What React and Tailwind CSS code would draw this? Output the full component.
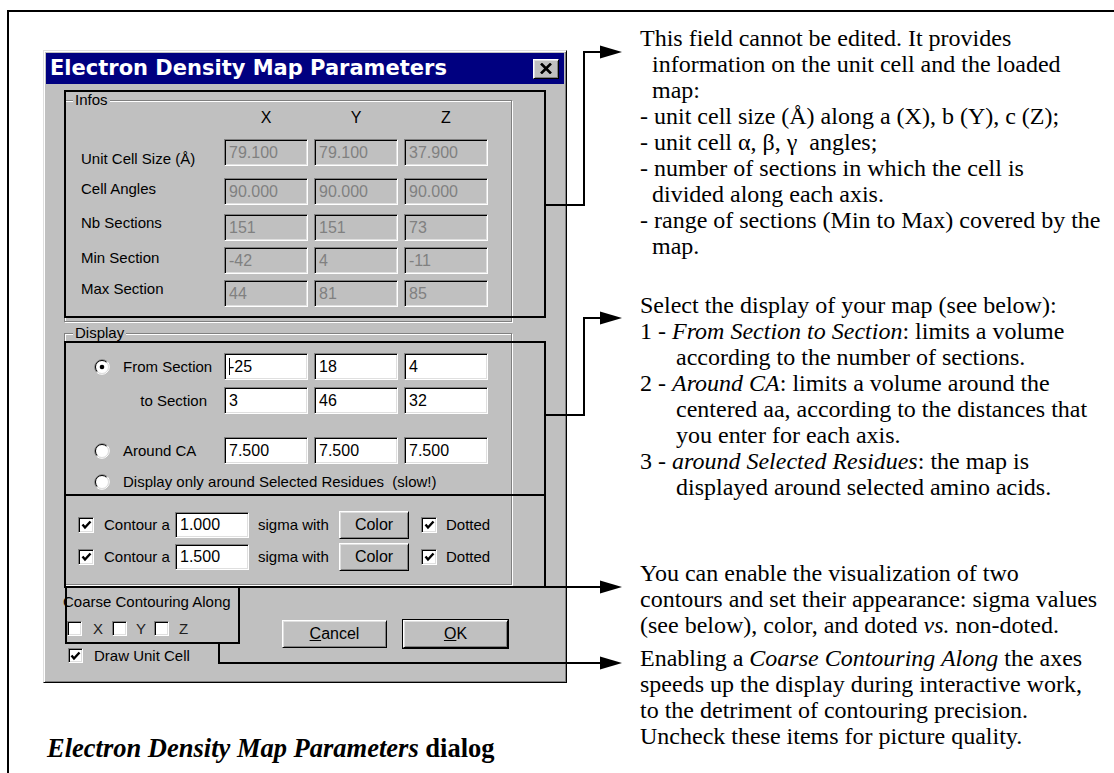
import React from "react";

// Win95 style bevels
const raised =
  "border border-t-white border-l-white border-b-black border-r-black shadow-[inset_1px_1px_0_#dfdfdf,inset_-1px_-1px_0_#808080]";
const sunken =
  "border border-t-[#808080] border-l-[#808080] border-b-white border-r-white shadow-[inset_1px_1px_0_#000,inset_-1px_-1px_0_#dfdfdf]";
const etched = "border border-[#808080] shadow-[inset_1px_1px_0_#fff,1px_1px_0_#fff]";

const Field = ({ value, on, w = "w-[84px]", h = "h-[27px]", caret }) => (
  <div
    className={`${w} ${h} ${sunken} ${
      on ? "bg-white text-black" : "bg-[#c0c0c0] text-[#808080]"
    } flex items-center pl-[4px] text-[16px] leading-none`}
  >
    {caret && <span className="w-[1px] h-[17px] bg-black -mr-[1px]"></span>}
    {value}
  </div>
);

const Check = ({ on, size = "w-[16px] h-[16px]", cls = "" }) => (
  <div className={`${size} ${sunken} bg-white flex items-center justify-center shrink-0 ${cls}`}>
    {on && (
      <svg width="11" height="10" viewBox="0 0 11 10">
        <polyline points="1.5,4.5 4,7.5 9.5,1.5" fill="none" stroke="#000" strokeWidth="2.4" />
      </svg>
    )}
  </div>
);

const Radio = ({ on }) => (
  <svg width="16" height="16" viewBox="0 0 16 16" className="shrink-0">
    <circle cx="8" cy="8" r="6.5" fill="#fff" />
    <path d="M2.7 13.3 A7.5 7.5 0 0 1 13.3 2.7" fill="none" stroke="#808080" strokeWidth="1" />
    <path d="M13.3 2.7 A7.5 7.5 0 0 1 2.7 13.3" fill="none" stroke="#fff" strokeWidth="1" />
    <path d="M3.4 12.6 A6.5 6.5 0 0 1 12.6 3.4" fill="none" stroke="#000" strokeWidth="1" />
    <path d="M12.6 3.4 A6.5 6.5 0 0 1 3.4 12.6" fill="none" stroke="#dfdfdf" strokeWidth="1" />
    {on && <circle cx="8" cy="8" r="2.3" fill="#000" />}
  </svg>
);

const InfoRow = ({ label, vals, mt, pt }) => (
  <div className={`flex ${mt}`}>
    <div className={`w-[159px] pl-[16px] ${pt} text-[15px] leading-[18px]`}>{label}</div>
    <div className="flex gap-[6px]">
      {vals.map((v, i) => (
        <Field key={i} value={v} />
      ))}
    </div>
  </div>
);

const ContourRow = ({ value, mt }) => (
  <div className={`flex items-center h-[28px] pl-[13px] ${mt}`}>
    <Check on />
    <span className="ml-[10px] w-[71px]">Contour a</span>
    <Field value={value} on w="w-[74px]" h="h-[26px]" />
    <span className="ml-[9px] w-[81px]">sigma with</span>
    <div className={`w-[70px] h-[28px] ${raised} flex items-center justify-center text-[16px]`}>Color</div>
    <Check on cls="ml-[12px]" />
    <span className="ml-[9px]">Dotted</span>
  </div>
);

const Dialog = () => (
  <div className="ml-[34px] mt-[38px] w-[524px] h-[633px] bg-[#c0c0c0] p-[2px] border border-t-[#dfdfdf] border-l-[#dfdfdf] border-b-black border-r-black shadow-[inset_1px_1px_0_#fff,inset_-1px_-1px_0_#808080] [font-family:'Liberation_Sans',Arial,sans-serif] text-[15px] leading-[18px] text-black">
    {/* title bar */}
    <div className="h-[31px] bg-[#000080] flex items-center justify-between pl-[4px] pr-[5px]">
      <span className="[font-family:'DejaVu_Sans',Verdana,sans-serif] font-bold text-[21px] leading-none text-white">
        Electron Density Map Parameters
      </span>
      <div className={`w-[26px] h-[20px] bg-[#c0c0c0] ${raised} flex items-center justify-center`}>
        <svg width="12" height="11" viewBox="0 0 12 11">
          <path d="M1 0.5 L11 10.5 M11 0.5 L1 10.5" stroke="#000" strokeWidth="2.6" />
        </svg>
      </div>
    </div>

    {/* Infos */}
    <div className={`relative mt-[16px] ml-[18px] w-[448px] h-[222px] ${etched}`}>
      <span className="absolute -top-[10px] left-[8px] px-[2px] bg-[#c0c0c0]">Infos</span>
      <div className="flex mt-[7px] h-[20px] items-center text-[16px]">
        <div className="w-[159px]"></div>
        <div className="flex gap-[6px]">
          <span className="w-[84px] text-center">X</span>
          <span className="w-[84px] text-center">Y</span>
          <span className="w-[84px] text-center">Z</span>
        </div>
      </div>
      <InfoRow label="Unit Cell Size (Å)" vals={["79.100", "79.100", "37.900"]} mt="mt-[11px]" pt="pt-[11px]" />
      <InfoRow label="Cell Angles" vals={["90.000", "90.000", "90.000"]} mt="mt-[10px]" pt="pt-[2px]" />
      <InfoRow label="Nb Sections" vals={["151", "151", "73"]} mt="mt-[9px]" pt="pt-0" />
      <InfoRow label="Min Section" vals={["-42", "4", "-11"]} mt="mt-[6px]" pt="pt-[2px]" />
      <InfoRow label="Max Section" vals={["44", "81", "85"]} mt="mt-[6px]" pt="pt-0" />
    </div>

    {/* Display */}
    <div className={`relative mt-[11px] ml-[18px] w-[448px] h-[252px] ${etched}`}>
      <span className="absolute -top-[10px] left-[8px] px-[2px] bg-[#c0c0c0]">Display</span>
      <div className="flex mt-[19px]">
        <div className="w-[159px] flex items-center pl-[29px]">
          <Radio on />
          <span className="ml-[13px]">From Section</span>
        </div>
        <div className="flex gap-[6px]">
          <Field value="-25" on caret />
          <Field value="18" on />
          <Field value="4" on />
        </div>
      </div>
      <div className="flex mt-[7px]">
        <div className="w-[159px] flex items-center justify-end pr-[17px]">to Section</div>
        <div className="flex gap-[6px]">
          <Field value="3" on />
          <Field value="46" on />
          <Field value="32" on />
        </div>
      </div>
      <div className="flex mt-[23px]">
        <div className="w-[159px] flex items-center pl-[29px]">
          <Radio />
          <span className="ml-[13px]">Around CA</span>
        </div>
        <div className="flex gap-[6px]">
          <Field value="7.500" on />
          <Field value="7.500" on />
          <Field value="7.500" on />
        </div>
      </div>
      <div className="flex items-center h-[18px] mt-[9px] pl-[29px]">
        <Radio />
        <span className="ml-[13px]">Display only around Selected Residues&nbsp; (slow!)</span>
      </div>
      <ContourRow value="1.000" mt="mt-[20px]" />
      <ContourRow value="1.500" mt="mt-[4px]" />
    </div>

    {/* bottom */}
    <div className="flex items-start">
      <div className="ml-[18px] w-[200px]">
        <div className="mt-[8px] -ml-[1px]">Coarse Contouring Along</div>
        <div className="flex items-center h-[15px] mt-[10px] text-[#202020]">
          <Check size="w-[15px] h-[15px]" cls="ml-[3px]" />
          <span className="ml-[11px] w-[19px]">X</span>
          <Check size="w-[15px] h-[15px]" />
          <span className="ml-[9px] w-[18px]">Y</span>
          <Check size="w-[15px] h-[15px]" />
          <span className="ml-[10px]">Z</span>
        </div>
        <div className="flex items-center h-[15px] mt-[12px]">
          <Check on size="w-[15px] h-[15px]" cls="ml-[4px]" />
          <span className="ml-[11px]">Draw Unit Cell</span>
        </div>
      </div>
      <div className={`ml-[18px] mt-[35px] w-[105px] h-[28px] ${raised} flex items-center justify-center text-[16px]`}>
        <span>
          <span className="underline">C</span>ancel
        </span>
      </div>
      <div className="ml-[15px] mt-[34px] border border-black">
        <div className={`w-[105px] h-[28px] ${raised} flex items-center justify-center text-[16px]`}>
          <span>
            <span className="underline">O</span>K
          </span>
        </div>
      </div>
    </div>
  </div>
);

const Line = ({ children, indent = "" }) => <div className={`whitespace-nowrap ${indent}`}>{children}</div>;

const Notes = () => (
  <div className="flex-1 [font-family:'Liberation_Serif','Times_New_Roman',serif] text-[24px] leading-[26px] text-black">
    <div className="mt-[13px]">
      <Line>This field cannot be edited. It provides</Line>
      <Line indent="pl-[12px]">information on the unit cell and the loaded</Line>
      <Line indent="pl-[12px]">map:</Line>
      <Line>- unit cell size (Å) along a (X), b (Y), c (Z);</Line>
      <Line>- unit cell α, β, γ&nbsp; angles;</Line>
      <Line>- number of sections in which the cell is</Line>
      <Line indent="pl-[12px]">divided along each axis.</Line>
      <Line>- range of sections (Min to Max) covered by the</Line>
      <Line indent="pl-[12px]">map.</Line>
    </div>
    <div className="mt-[33px]">
      <Line>Select the display of your map (see below):</Line>
      <Line>
        1 - <i>From Section to Section</i>: limits a volume
      </Line>
      <Line indent="pl-[36px]">according to the number of sections.</Line>
      <Line>
        2 - <i>Around CA</i>: limits a volume around the
      </Line>
      <Line indent="pl-[36px]">centered aa, according to the distances that</Line>
      <Line indent="pl-[36px]">you enter for each axis.</Line>
      <Line>
        3 - <i>around Selected Residues</i>: the map is
      </Line>
      <Line indent="pl-[36px]">displayed around selected amino acids.</Line>
    </div>
    <div className="mt-[60px]">
      <Line>You can enable the visualization of two</Line>
      <Line>contours and set their appearance: sigma values</Line>
      <Line>
        (see below), color, and doted <i>vs.</i> non-doted.
      </Line>
    </div>
    <div className="mt-[7px]">
      <Line>
        Enabling a <i>Coarse Contouring Along</i> the axes
      </Line>
      <Line>speeds up the display during interactive work,</Line>
      <Line>to the detriment of contouring precision.</Line>
      <Line>Uncheck these items for picture quality.</Line>
    </div>
  </div>
);

// callout lines drawn over the dialog
const Callouts = () => (
  <svg
    className="absolute left-0 top-0 pointer-events-none"
    width="1114"
    height="773"
    viewBox="0 0 1114 773"
  >
    <g fill="none" stroke="#000" strokeWidth="2">
      <rect x="65" y="91" width="480" height="226" />
      <rect x="65" y="342" width="480" height="153" />
      <rect x="65" y="495" width="480" height="92" />
      <rect x="66" y="587" width="173" height="56" />
      <polyline points="546,205 584,205 584,52 602,52" />
      <polyline points="546,415 584,415 584,318 602,318" />
      <polyline points="546,587 602,587" />
      <polyline points="219,643 219,663 602,663" />
    </g>
    <g fill="#000">
      <polygon points="600,45.5 622,52 600,58.5" />
      <polygon points="600,311.5 622,318 600,324.5" />
      <polygon points="600,580.5 622,587 600,593.5" />
      <polygon points="600,656.5 622,663 600,669.5" />
    </g>
  </svg>
);

export default function App() {
  return (
    <div className="relative w-[1114px] h-[773px] bg-white overflow-hidden pt-[10px] pl-[7px]">
      <div className="flex h-[763px] border-t-2 border-l-2 border-black">
        <div className="w-[631px] shrink-0">
          <Dialog />
          <div className="ml-[38px] mt-[51px] [font-family:'Liberation_Serif','Times_New_Roman',serif] text-[26.5px] leading-[28px] font-bold whitespace-nowrap">
            <i>Electron Density Map Parameters</i> dialog
          </div>
        </div>
        <Notes />
      </div>
      <Callouts />
    </div>
  );
}
